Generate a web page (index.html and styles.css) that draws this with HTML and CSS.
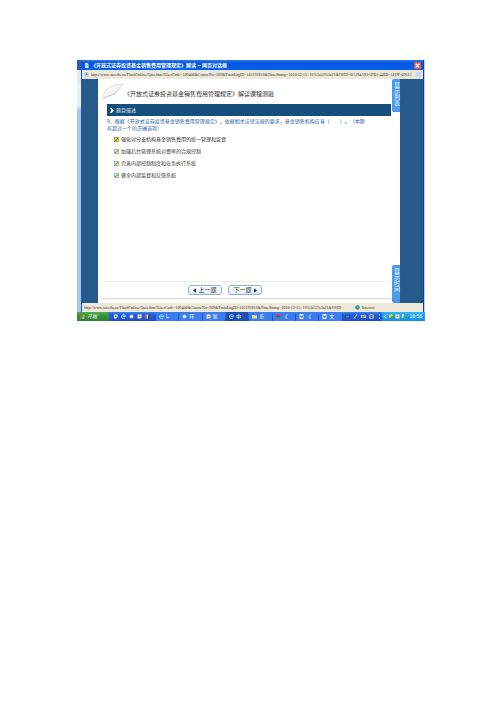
FILE: index.html
```html
<!DOCTYPE html>
<html lang="zh-CN">

<head>
    <meta charset="UTF-8">
    <title>网页对话框</title>
    <link rel="stylesheet" href="styles.css">
</head>

<body>
    <div class="screen">
        <div class="desktop">
            <div class="behind left">
                <div class="behind-title"></div>
                <div class="behind-bar"></div>
            </div>
            <div class="window">
                <div class="title-bar">
                    <svg class="icon" viewBox="0 0 10 10"><path fill="#e8f3ff" d="M2 0h5l2 2v8H2z"/><path fill="none" stroke="#3b8fd0" d="M4 7a2 2 0 1 1 3-2H4"/></svg>
                    <span class="title">《开放式证券投资基金销售费用管理规定》解读 -- 网页对话框</span>
                    <button class="close" aria-label="关闭"><svg viewBox="0 0 8 8"><path d="M2 2l4 4M6 2L2 6" stroke="#fff" stroke-width="1.3"/></svg></button>
                </div>
                <div class="address">
                    <svg class="icon" viewBox="0 0 10 10"><path fill="#fff" stroke="#9ab" d="M2 1h6v8H2z"/><path fill="none" stroke="#2a7bd0" stroke-width="1.5" d="M4 7a2 2 0 1 1 3-2H4"/></svg>
                    <span class="url">http://www.sacedu.cn/FlashOnline/Quiz.htm?UserCode=109400&amp;CourseNo=209&amp;TrainLogID=103192816&amp;TimeStamp=2010-12-15+16%3a53%3a21&amp;OSID=B1394A93-5FB1-44EB-AFDF-0961C</span>
                    <span class="more"></span>
                </div>
                <div class="content">
                    <div class="page">
                        <div class="heading">
                            <svg class="curl" viewBox="0 0 24 18">
                                <defs>
                                    <linearGradient id="paper" x1="0" y1="0" x2="1" y2="1">
                                        <stop offset="0" stop-color="#fff"/>
                                        <stop offset="0.5" stop-color="#f3f3f3"/>
                                        <stop offset="1" stop-color="#c8c8c8"/>
                                    </linearGradient>
                                </defs>
                                <path d="M1 17C1 9 7 1 23 1c-4 3-4 6-7 9-3 3-9 3-15 7z" fill="url(#paper)" stroke="#d0d0d0" stroke-width="0.6"/>
                                <path d="M1 17c6-4 12-4 15-7" fill="none" stroke="#b8b8b8" stroke-width="0.6"/>
                            </svg>
                            <h1>《开放式证券投资基金销售费用管理规定》解读课程测验</h1>
                        </div>
                        <h2 class="section"><svg class="arrow" viewBox="0 0 4 5"><path d="M0 0h1.5L4 2.5 1.5 5H0l1.2-2.5z" fill="#fff"/></svg>题目描述</h2>
                        <form class="quiz">
                            <p class="question">9、根据《开放式证券投资基金销售费用管理规定》，依据相关法律法规的要求，基金销售机构应当（&#12288;&#12288;）。（本题<br>有超过一个的正确选项）</p>
                            <label class="option"><input type="checkbox" class="hot" checked>强化对分支机构基金销售费用的统一管理和监督</label>
                            <label class="option"><input type="checkbox" checked>加强后台管理系统对费率的合规控制</label>
                            <label class="option"><input type="checkbox" checked>完善内部控制制度和业务执行系统</label>
                            <label class="option"><input type="checkbox" checked>健全内部监督和反馈系统</label>
                        </form>
                        <div class="pager">
                            <button><svg viewBox="0 0 4 6"><path d="M4 0v6L0 3z"/></svg>上一题</button>
                            <button>下一题<svg viewBox="0 0 4 6"><path d="M0 0v6l4-3z"/></svg></button>
                        </div>
                    </div>
                    <div class="tabs">
                        <button class="tab">显示列表</button>
                        <button class="tab bottom">显示时间</button>
                    </div>
                </div>
                <div class="status">
                    <span class="url">http://www.sacedu.cn/FlashOnline/Quiz.htm?UserCode=109400&amp;CourseNo=209&amp;TrainLogID=103192816&amp;TimeStamp=2010-12-15+16%3a53%3a21&amp;OSID</span>
                    <span class="zone"><svg class="icon" viewBox="0 0 10 10"><circle cx="5" cy="5" r="4.5" fill="#2c8fb8"/><path d="M2 3l3-2 1 3-2 3zM6 6l3-1-2 4z" fill="#58b85a"/></svg>Internet</span>
                </div>
            </div>
            <div class="behind right"></div>
        </div>
        <div class="taskbar">
            <button class="start"><svg class="icon" viewBox="0 0 10 10"><path fill="#e8562a" d="M1 2l4-1v4L0 6z"/><path fill="#8cd04a" d="M6 1l4 1-1 4-4-1z"/><path fill="#4a9bf0" d="M0 7l4-1v3L0 10z"/><path fill="#f6cf3c" d="M5 6l4 1-1 3-4-1z"/></svg>开始</button>
            <div class="quick">
                <svg class="icon" viewBox="0 0 10 10"><path fill="#dceaff" d="M2 1h7v6L6 9H2z"/><path fill="#3a78c8" d="M4 3h3v3H4z"/></svg>
                <svg class="icon" viewBox="0 0 10 10"><path fill="none" stroke="#a5e2ff" stroke-width="2" d="M8 8a4 4 0 1 1 1-3H3"/></svg>
                <svg class="icon" viewBox="0 0 10 10"><circle cx="5" cy="5" r="4" fill="#b8d7fa"/><path fill="#fff" d="M2 4h6v2H2z"/></svg>
                <svg class="icon" viewBox="0 0 10 10"><path fill="#f7e7c0" d="M1 1h8v8H1z"/><path stroke="#e29a3a" stroke-width="2" d="M3 5h4"/></svg>
                <svg class="icon" viewBox="0 0 10 10"><path fill="#e87f36" d="M1 1h3v8H1z"/><path fill="#f8efe0" d="M4 1h2v8H4z"/><path fill="#333" d="M6 1h2v8H6z"/></svg>
            </div>
            <div class="tasks">
                <button><svg class="icon" viewBox="0 0 10 10"><path fill="none" stroke="#8ed8ff" stroke-width="2" d="M8 8a4 4 0 1 1 1-3H3"/></svg>L</button>
                <button><svg class="icon" viewBox="0 0 10 10"><circle cx="5" cy="5" r="4" fill="#b8d7fa"/><path fill="#fff" d="M2 4h6v2H2z"/></svg>环</button>
                <button><svg class="icon" viewBox="0 0 10 10"><path fill="#f7e7c0" d="M1 1h8v8H1z"/><path stroke="#e29a3a" stroke-width="2" d="M3 5h4"/></svg>新</button>
                <button class="active"><svg class="icon" viewBox="0 0 10 10"><path fill="none" stroke="#8ed8ff" stroke-width="2" d="M8 8a4 4 0 1 1 1-3H3"/></svg>中</button>
                <button><svg class="icon" viewBox="0 0 10 10"><path fill="#f6de76" d="M0 2h4l1 1h5v6H0z"/></svg>系</button>
                <button><svg class="icon" viewBox="0 0 10 10"><path fill="#c0405c" d="M1 0h8v4H1z"/><path fill="#5a4a9c" d="M1 4h8v2H1z"/><path fill="#4b8a4b" d="M1 6h8v4H1z"/></svg>《</button>
                <button><svg class="icon" viewBox="0 0 10 10"><path fill="#eef4ff" d="M1 0h8v10H1z"/><path fill="none" stroke="#2e5fb8" stroke-width="1.4" d="M2 3l2 4 1-3 1 3 2-4"/></svg>《</button>
                <button><svg class="icon" viewBox="0 0 10 10"><path fill="#eef4ff" d="M1 0h8v10H1z"/><path fill="none" stroke="#2e5fb8" stroke-width="1.4" d="M2 3l2 4 1-3 1 3 2-4"/></svg>文</button>
            </div>
            <div class="lang">
                <svg class="icon" viewBox="0 0 10 10"><path fill="#16356f" d="M0 2h10v6H0z"/><path stroke="#b7ccf0" d="M1 4h8M1 6h8"/></svg>
                <svg class="icon" viewBox="0 0 10 10"><path stroke="#f4f4f4" stroke-width="2" d="M2 9l6-8"/></svg>
                <svg class="icon" viewBox="0 0 10 10"><path fill="#f4f4f4" d="M0 2h10v6H0z"/><path fill="#222" d="M2 4h3v3H2zM6 3h3v2H6z"/></svg>
                <svg class="icon" viewBox="0 0 10 10"><path fill="#f4f4f4" d="M1 1h8v8H1z"/><path fill="none" stroke="#222" d="M3 3h4v4H3zM5 2v6"/></svg>
                <svg class="icon" viewBox="0 0 10 10"><path fill="#dbe8ff" d="M4 1h2v2H4zM4 7h2v2H4z"/></svg>
            </div>
            <div class="tray">
                <svg class="icon" viewBox="0 0 10 10"><circle cx="5" cy="5" r="4.5" fill="#4fb8f4"/><path fill="none" stroke="#fff" stroke-width="1.5" d="M6 2L3 5l3 3"/></svg>
                <svg class="icon" viewBox="0 0 10 10"><circle cx="4" cy="4" r="4" fill="#f0c43c"/><circle cx="7" cy="7" r="3" fill="#44a64a"/></svg>
                <svg class="icon" viewBox="0 0 10 10"><path fill="#f7e7c0" d="M1 1h8v8H1z"/><path stroke="#e29a3a" stroke-width="2" d="M3 5h4"/></svg>
                <svg class="icon" viewBox="0 0 10 10"><path fill="#e6f4e6" d="M2 0h4v8H2z"/><path fill="#43b44a" d="M4 5h5v4H4z"/></svg>
                <span class="clock">16:56</span>
            </div>
        </div>
    </div>
</body>

</html>
```
FILE: styles.css
```css
html,
body {
    padding: 0;
    margin: 0;
    background: #fff;
}

body {
    font-family: "Liberation Sans", "Noto Sans CJK SC", sans-serif;
    font-size: 5px;
    line-height: 7px;
    color: #333;
    text-spacing-trim: space-all;
}

button {
    margin: 0;
    padding: 0;
    border: 0;
    font: inherit;
    color: inherit;
    background: none;
}

svg {
    display: block;
    flex: none;
}

.icon {
    width: 5px;
    height: 5px;
}

.screen {
    margin: 60px 15% 0 77px;
}

.desktop {
    display: flex;
    align-items: stretch;
}

.behind {
    flex: none;
    background: #9cc4ee;
}

.left {
    width: 4px;
    background: linear-gradient(#e8f0fa 0, #e8f0fa 45px, #a9c9e8 50px);
}

.behind-title {
    height: 10px;
    background: #2c5cb8;
}

.behind-bar {
    height: 12px;
    background: #dfe8f4;
}

.right {
    width: 1px;
    background: #c4cdf4;
}

.window {
    flex: 1;
    min-width: 0;
    border-left: 1px solid #1c4fc8;
    border-right: 1px solid #1438b0;
}

.title-bar {
    display: flex;
    align-items: center;
    gap: 2px;
    height: 10px;
    padding: 0 2px;
    background: linear-gradient(#2a7cf4, #0653e0 30%, #0560f0);
    color: #fff;
}

.title {
    flex: 1;
    white-space: nowrap;
    font-weight: bold;
}

.close {
    width: 7px;
    height: 7px;
    border-radius: 1px;
    background: #e0603c;
}

.address,
.status {
    display: flex;
    align-items: center;
    gap: 2px;
    height: 9px;
    padding: 0 2px;
    background: #ece9d8;
}

.url {
    flex: 1;
    min-width: 0;
    overflow: hidden;
    white-space: nowrap;
    font-family: "Liberation Serif", serif;
    font-size: 4px;
}

.more {
    width: 5px;
    height: 5px;
    background: #c3d5fb;
}

.content {
    display: flex;
    padding: 0 23px 0 16px;
    background: #265a8a;
}

.page {
    flex: 1;
    display: flex;
    flex-direction: column;
    min-height: 224px;
    background: #fff;
}

.heading {
    display: flex;
    align-items: center;
    height: 25px;
    padding-left: 4px;
}

.curl {
    width: 22px;
    height: 17px;
}

h1 {
    margin: 5px 0 0;
    font-size: 6px;
    font-weight: normal;
    line-height: 8px;
    white-space: nowrap;
}

.section {
    display: flex;
    align-items: center;
    gap: 2px;
    height: 12px;
    margin: 0 0 0 9px;
    padding-left: 3px;
    background: #144e7c;
    color: #dfeaf4;
    font-size: 5px;
    font-weight: normal;
}

.arrow {
    width: 4px;
    height: 5px;
}

.quiz {
    flex: 1;
    padding: 2px 0 0 9px;
}

.question {
    margin: 0 0 1px;
    color: #2f62a0;
    white-space: nowrap;
}

.option {
    display: flex;
    align-items: center;
    gap: 2px;
    height: 12px;
    padding-left: 7px;
}

.option input {
    appearance: none;
    width: 5px;
    height: 5px;
    margin: 0;
    border: 1px solid #9db9a0;
    background: linear-gradient(135deg, #f2faee 30%, #5cae3c 50%, #f2faee 80%);
}

.option .hot {
    border-color: #c0a02c;
    background: linear-gradient(135deg, #f4dc6a 30%, #6d7a1c 50%, #f4dc6a 80%);
}

.pager {
    display: flex;
    gap: 6px;
    margin: 0 0 4px 4px;
    padding: 3px 0 3px 86px;
    border-top: 1px solid #ececec;
    border-bottom: 1px solid #dcdcdc;
}

.pager button {
    display: flex;
    align-items: center;
    justify-content: center;
    gap: 2px;
    width: 34px;
    height: 10px;
    border: 1px solid #8fb0e4;
    border-radius: 3px;
    background: linear-gradient(#fff, #e4ecf8);
    font-size: 6px;
}

.pager svg {
    width: 3px;
    height: 5px;
    fill: #1e3158;
}

.tabs {
    display: flex;
    flex-direction: column;
    justify-content: space-between;
    width: 8px;
    padding-left: 1px;
    background: #fff;
}

.tab {
    display: flex;
    align-items: center;
    height: 33px;
    padding-top: 3px;
    border-radius: 2px 0 0 2px;
    background: #4b9aec;
    color: #e6f2ff;
    font-size: 6px;
    writing-mode: vertical-rl;
}

.bottom {
    height: 38px;
}

.zone {
    display: flex;
    align-items: center;
    gap: 2px;
    width: 66px;
    font-family: "Liberation Serif", serif;
    font-size: 4px;
}

.taskbar {
    display: flex;
    height: 9px;
    background: linear-gradient(#3a80f0, #245edb 30%, #1f50c4);
    color: #fff;
}

.taskbar button {
    display: flex;
    align-items: center;
    gap: 2px;
}

.start {
    width: 32px;
    padding-left: 3px;
    border-radius: 0 3px 3px 0;
    background: linear-gradient(#56ac50, #37903a 40%, #2e8234);
    font-style: italic;
}

.quick,
.lang,
.tray {
    display: flex;
    align-items: center;
    gap: 3px;
    padding-left: 4px;
}

.tasks {
    flex: 1;
    display: flex;
    gap: 1px;
    padding-left: 6px;
}

.tasks button {
    flex: 1;
    padding-left: 3px;
    border-radius: 1px;
    background: #3b7cf0;
}

.tasks .active {
    background: #1c4fb4;
}

.lang {
    gap: 3px;
}

.tray {
    gap: 1px;
    padding: 0 3px 0 1px;
    background: linear-gradient(#2fb0f6, #1290e8);
}

.clock {
    padding-left: 2px;
    font-size: 5px;
}
```
